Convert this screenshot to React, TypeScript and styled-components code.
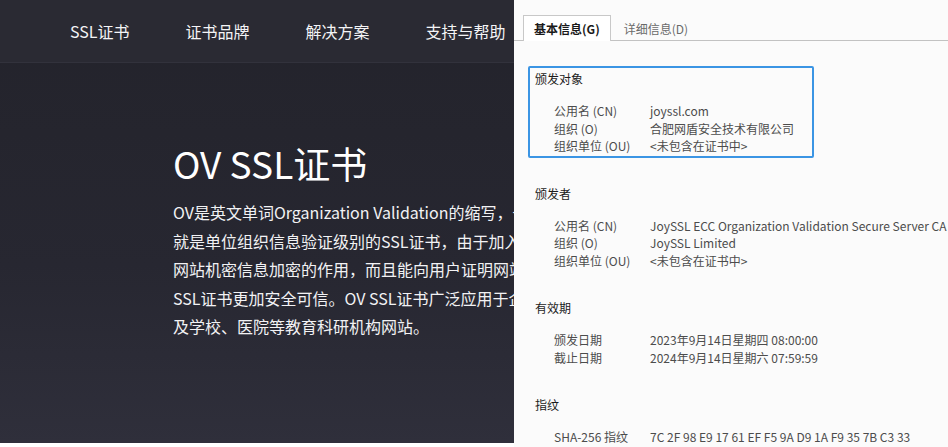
import React from 'react';
import styled, { createGlobalStyle } from 'styled-components';

const GlobalStyle = createGlobalStyle`
  html, body {
    margin: 0;
    padding: 0;
    background: #ffffff;
  }
  body {
    font-family: "Noto Sans CJK SC", "Noto Sans", sans-serif;
  }
`;

const Page = styled.div`
  display: flex;
  width: 948px;
  height: 447px;
  overflow: hidden;
`;

const Site = styled.div`
  width: 514px;
  height: 443px;
  flex-shrink: 0;
  display: flex;
  flex-direction: column;
  overflow: hidden;
  background: linear-gradient(180deg, #23232b 0%, #272731 60%, #2f2f3b 100%);
`;

const Nav = styled.nav`
  height: 63px;
  flex-shrink: 0;
  display: flex;
  align-items: center;
  gap: 56px;
  padding-left: 70px;
  background: #2a2a33;
  border-bottom: 1px solid #32323c;
  box-sizing: border-box;
`;

const NavItem = styled.a`
  font-size: 16px;
  color: #f4f4f6;
  white-space: nowrap;
  text-decoration: none;
`;

const Hero = styled.section`
  padding: 78px 0 0 173px;
  display: flex;
  flex-direction: column;
`;

const Title = styled.h1`
  margin: 0 0 13px;
  font-size: 37px;
  font-weight: 400;
  line-height: 44px;
  color: #ffffff;
  white-space: nowrap;
`;

const Line = styled.p`
  margin: 0;
  font-size: 16px;
  line-height: 28.6px;
  color: #f2f2f4;
  white-space: nowrap;
`;

const Dialog = styled.div`
  flex: 1;
  height: 447px;
  background: #fbfbfb;
  display: flex;
  flex-direction: column;
  color: #1a1a1a;
`;

const TabBar = styled.div`
  display: flex;
  align-items: flex-end;
  padding: 15px 0 0 9px;
  height: 41px;
  box-sizing: border-box;
  border-bottom: 1px solid #c2c2c2;
`;

const Tab = styled.div<{ $active?: boolean }>`
  height: 26px;
  box-sizing: border-box;
  display: flex;
  align-items: center;
  padding: 0 10px 0 ${({ $active }) => ($active ? '10px' : '12px')};
  margin-bottom: -1px;
  font-size: 12px;
  font-weight: ${({ $active }) => ($active ? 700 : 400)};
  color: ${({ $active }) => ($active ? '#1a1a1a' : '#6a6a6a')};
  background: ${({ $active }) => ($active ? '#ffffff' : 'transparent')};
  border: 1px solid ${({ $active }) => ($active ? '#c8c8c8' : 'transparent')};
  border-bottom: none;
`;

const Body = styled.div`
  display: flex;
  flex-direction: column;
  gap: 23px;
  padding: 25px 0 0 14px;
`;

const Section = styled.div<{ $focused?: boolean }>`
  width: ${({ $focused }) => ($focused ? '286px' : 'auto')};
  box-sizing: border-box;
  padding: 2px 5px 1px;
  border: 2px solid ${({ $focused }) => ($focused ? '#3b95e4' : 'transparent')};
  border-radius: 2px;
`;

const Heading = styled.div`
  font-size: 12px;
  line-height: 18px;
  color: #1c1c1c;
  margin-bottom: 14px;
`;

const Row = styled.div`
  display: grid;
  grid-template-columns: 96px auto;
  padding-left: 19px;
  font-size: 12px;
  line-height: 17.5px;
  color: #4c4c4c;
  white-space: nowrap;
`;

const sections = [
  {
    title: '颁发对象',
    focused: true,
    rows: [
      ['公用名 (CN)', 'joyssl.com'],
      ['组织 (O)', '合肥网盾安全技术有限公司'],
      ['组织单位 (OU)', '<未包含在证书中>'],
    ],
  },
  {
    title: '颁发者',
    rows: [
      ['公用名 (CN)', 'JoySSL ECC Organization Validation Secure Server CA'],
      ['组织 (O)', 'JoySSL Limited'],
      ['组织单位 (OU)', '<未包含在证书中>'],
    ],
  },
  {
    title: '有效期',
    rows: [
      ['颁发日期', '2023年9月14日星期四 08:00:00'],
      ['截止日期', '2024年9月14日星期六 07:59:59'],
    ],
  },
  {
    title: '指纹',
    rows: [['SHA-256 指纹', '7C 2F 98 E9 17 61 EF F5 9A D9 1A F9 35 7B C3 33']],
  },
];

const navItems = ['SSL证书', '证书品牌', '解决方案', '支持与帮助'];

// the dialog covers the right part of the page, so these lines run on under it
const heroLines = [
  'OV是英文单词Organization Validation的缩写，也',
  '就是单位组织信息验证级别的SSL证书，由于加入了企业信息，不仅',
  '网站机密信息加密的作用，而且能向用户证明网站的真实身份，',
  'SSL证书更加安全可信。OV SSL证书广泛应用于企业、政府机构',
  '及学校、医院等教育科研机构网站。',
];

const App: React.FC = () => {
  return (
    <>
      <GlobalStyle />
      <Page>
        <Site>
          <Nav>
            {navItems.map((item) => (
              <NavItem key={item}>{item}</NavItem>
            ))}
          </Nav>
          <Hero>
            <Title>OV SSL证书</Title>
            {heroLines.map((line) => (
              <Line key={line}>{line}</Line>
            ))}
          </Hero>
        </Site>

        <Dialog>
          <TabBar>
            <Tab $active>基本信息(G)</Tab>
            <Tab>详细信息(D)</Tab>
          </TabBar>
          <Body>
            {sections.map((section) => (
              <Section key={section.title} $focused={section.focused}>
                <Heading>{section.title}</Heading>
                {section.rows.map(([label, value]) => (
                  <Row key={label}>
                    <span>{label}</span>
                    <span>{value}</span>
                  </Row>
                ))}
              </Section>
            ))}
          </Body>
        </Dialog>
      </Page>
    </>
  );
};

export default App;
